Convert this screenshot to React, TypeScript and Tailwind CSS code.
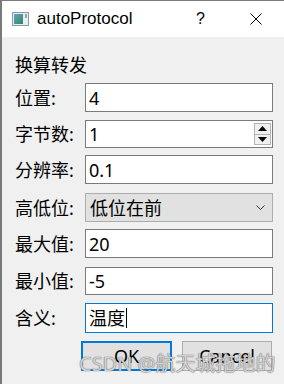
import React from "react"

const font = { fontFamily: '"Noto Sans", "Noto Sans CJK SC", sans-serif' }

function Label({ text }: { text: string }) {
  return (
    <div className="w-[83px] shrink-0 whitespace-nowrap pl-[13px] text-[18px] leading-[24px] text-black">
      {text}
    </div>
  )
}

function TextBox({ value, h, focus }: { value: string; h: string; focus?: boolean }) {
  return (
    <div
      className={`${h} w-[188px] shrink-0 flex items-center bg-white border pl-[3px] text-[18px] leading-[24px] text-black ${
        focus ? "border-[#0078d7]" : "border-[#7a7a7a]"
      }`}
    >
      <span>{value}</span>
      {focus && <span className="ml-[1px] w-[1px] h-[20px] bg-black" />}
    </div>
  )
}

export default function App() {
  return (
    <div
      className="relative w-[284px] h-[384px] overflow-hidden bg-[#f0f0f0] border-l-2 border-t border-[#7a7a7a]"
      style={font}
    >
      {/* title bar */}
      <div className="h-[36px] bg-white flex items-center">
        <svg width="17" height="14" viewBox="0 0 17 14" className="ml-[10px] shrink-0">
          <defs>
            <linearGradient id="g" x1="0" y1="0" x2="1" y2="1">
              <stop offset="0" stopColor="#6aa0c8" />
              <stop offset="1" stopColor="#2f8a5a" />
            </linearGradient>
          </defs>
          <rect x="0.5" y="0.5" width="16" height="13" fill="#e8eef2" stroke="#8a9aa6" />
          <rect x="2" y="2" width="9" height="10" fill="url(#g)" />
          <rect x="13" y="2" width="2" height="4" fill="#9aa4ac" />
        </svg>
        <span
          className="ml-[8px] w-[150px] shrink-0 text-[17px] leading-[20px] text-black"
          style={{ fontFamily: '"Liberation Sans", sans-serif' }}
        >
          autoProtocol
        </span>
        <span
          className="ml-[9px] text-[16px] leading-[20px] text-black"
          style={{ fontFamily: '"Liberation Sans", sans-serif' }}
        >
          ?
        </span>
        <svg width="12" height="12" viewBox="0 0 12 12" className="ml-[45px] shrink-0">
          <path d="M0.5 0.5 L11.5 11.5 M11.5 0.5 L0.5 11.5" stroke="#000" strokeWidth="1" />
        </svg>
      </div>

      {/* body */}
      <div className="flex flex-col pt-[16px]">
        <div className="pl-[13px] text-[18px] leading-[24px] text-black">换算转发</div>

        <div className="flex items-center mt-[6px]">
          <Label text="位置:" />
          <TextBox value="4" h="h-[29px]" />
        </div>

        <div className="flex items-center mt-[8px]">
          <Label text="字节数:" />
          <div className="h-[28px] w-[188px] shrink-0 flex items-center bg-white border border-[#7a7a7a] pl-[3px] text-[18px] leading-[24px] text-black">
            <span className="flex-1">1</span>
            <div className="flex flex-col mr-[1px] w-[17px] h-[22px]">
              <div className="flex-1 flex items-center justify-center bg-[#f0f0f0] border border-[#b4b4b4]">
                <svg width="9" height="5" viewBox="0 0 9 5">
                  <path d="M0 5 L4.5 0 L9 5 Z" fill="#000" />
                </svg>
              </div>
              <div className="flex-1 flex items-center justify-center bg-[#f0f0f0] border border-t-0 border-[#b4b4b4]">
                <svg width="9" height="5" viewBox="0 0 9 5">
                  <path d="M0 0 L4.5 5 L9 0 Z" fill="#000" />
                </svg>
              </div>
            </div>
          </div>
        </div>

        <div className="flex items-center mt-[7px]">
          <Label text="分辨率:" />
          <TextBox value="0.1" h="h-[29px]" />
        </div>

        <div className="flex items-center mt-[9px]">
          <Label text="高低位:" />
          <div className="h-[29px] w-[188px] shrink-0 flex items-center bg-[#e1e1e1] border border-[#adadad] pl-[4px] text-[18px] leading-[24px] text-black">
            <span className="flex-1">低位在前</span>
            <svg width="9" height="5" viewBox="0 0 9 5" className="mr-[7px]">
              <path d="M0.5 0.5 L4.5 4.5 L8.5 0.5" stroke="#333" strokeWidth="1" fill="none" />
            </svg>
          </div>
        </div>

        <div className="flex items-center mt-[7px]">
          <Label text="最大值:" />
          <TextBox value="20" h="h-[29px]" />
        </div>

        <div className="flex items-center mt-[9px]">
          <Label text="最小值:" />
          <TextBox value="-5" h="h-[28px]" />
        </div>

        <div className="flex items-center mt-[8px]">
          <Label text="含义:" />
          <TextBox value="温度" h="h-[30px]" focus />
        </div>

        <div className="flex mt-[8px] pl-[79px] gap-[10px]">
          <div className="w-[91px] h-[30px] shrink-0 flex items-center justify-center bg-[#e1e1e1] border-2 border-[#0078d7] text-[18px] leading-[24px] text-black">
            OK
          </div>
          <div className="w-[90px] h-[30px] shrink-0 flex items-center justify-center bg-[#e1e1e1] border border-[#adadad] text-[18px] leading-[24px] text-black">
            Cancel
          </div>
        </div>
      </div>

      {/* watermark */}
      <div className="absolute left-[77px] top-[351px] whitespace-nowrap text-[20px] leading-[24px] text-white/70 [text-shadow:0_0_1px_#6b6b6b,0_0_1px_#6b6b6b]">
        CSDN @航天城拖地的
      </div>
    </div>
  )
}
